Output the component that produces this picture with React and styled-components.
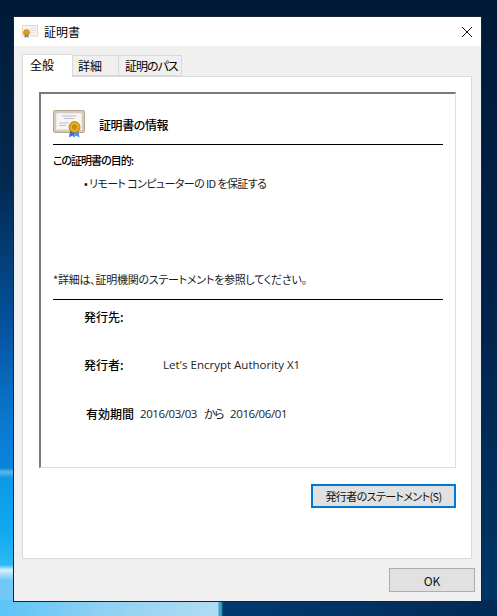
import React from 'react';
import styled, { createGlobalStyle } from 'styled-components';

const GlobalStyle = createGlobalStyle`
  html, body {
    margin: 0;
    padding: 0;
  }

  body {
    width: 497px;
    height: 616px;
    overflow: hidden;
    font-family: "Noto Sans CJK JP", "Open Sans", sans-serif;
    font-size: 12px;
    font-feature-settings: "palt";
    color: #000;
  }
`;

const Desktop = styled.div`
  box-sizing: border-box;
  width: 497px;
  height: 616px;
  padding: 16px 15px 14px 13px;
  background:
    linear-gradient(90deg, #5cc4f8 0, #8fd0f2 100px, #b0dcf2 218px, #3aa0c0 219px, #40a8c8 221px, #013a70 223px, #012a55 497px) 0 600px / 497px 16px no-repeat,
    linear-gradient(180deg, #001a38 0, #02294f 180px, #04509a 320px, #0a78d0 420px, #0a84dc 468px, #5ab8ea 472px, #0d98e8 478px, #10a8f0 530px, #30b8f4 565px, #d8f0fa 570px, #70c8f8 580px, #70c8f8 616px) 0 0 / 14px 616px no-repeat,
    linear-gradient(180deg, #001a38 0, #00234a 300px, #013766 616px);
`;

const Window = styled.div`
  box-sizing: border-box;
  height: 586px;
  display: flex;
  flex-direction: column;
  background: #f0f0f0;
  border: 1px solid #1a2430;
`;

const TitleBar = styled.div`
  display: flex;
  align-items: center;
  height: 29px;
  padding: 0 8px;
  background: #fff;
`;

const Title = styled.span`
  flex: 1;
  margin-left: 6px;
`;

const TabList = styled.div`
  display: flex;
  align-items: flex-end;
  height: 30px;
  margin: 0 9px 0 8px;
`;

const Tab = styled.div`
  box-sizing: border-box;
  width: ${props => props.$width}px;
  height: ${props => (props.$active ? 23 : 21)}px;
  padding-left: ${props => props.$inset}px;
  line-height: 19px;
  white-space: nowrap;
  letter-spacing: ${props => props.$spacing || 0}px;
  background: ${props => (props.$active ? '#fff' : '#f0f0f0')};
  border: 1px solid #d9d9d9;
  border-bottom: ${props => (props.$active ? 'none' : '1px solid #d9d9d9')};
  border-left: ${props => (props.$first ? '1px solid #d9d9d9' : 'none')};
  margin-bottom: ${props => (props.$active ? -1 : 0)}px;
  position: relative;
`;

const TabPane = styled.div`
  box-sizing: border-box;
  flex: 1;
  display: flex;
  flex-direction: column;
  margin: 0 9px 0 8px;
  padding: 15px 15px 0 16px;
  background: #fff;
  border: 1px solid #d9d9d9;
`;

const CertBox = styled.div`
  box-sizing: border-box;
  height: 376px;
  padding: 12px 12px 0 12px;
  border-top: 2px solid #7a7a7a;
  border-left: 2px solid #7a7a7a;
  border-right: 1px solid #e0e0e0;
  border-bottom: 1px solid #e0e0e0;
`;

const CertHeader = styled.div`
  box-sizing: border-box;
  display: flex;
  align-items: center;
  height: 39px;
  padding-bottom: 2px;
  border-bottom: 1px solid #000;
  gap: 14px;
  font-weight: 500;
  letter-spacing: -0.4px;
`;

const Purpose = styled.div`
  box-sizing: border-box;
  height: 155px;
  padding-top: 6px;
  border-bottom: 1px solid #000;
  display: flex;
  flex-direction: column;
  font-size: 11px;
`;

const PurposeTitle = styled.div`
  font-weight: 500;
  line-height: 18px;
  letter-spacing: -1px;
`;

const PurposeItem = styled.div`
  margin: 5px 0 0 31px;
  line-height: 18px;
  color: #1a1a1a;
  letter-spacing: -0.6px;
`;

const Note = styled.div`
  margin-top: auto;
  margin-bottom: 11px;
  line-height: 18px;
  color: #1a1a1a;
  letter-spacing: -0.25px;
`;

const InfoRows = styled.div`
  display: flex;
  flex-direction: column;
  gap: 30.5px;
  padding-top: 7px;
`;

const InfoRow = styled.div`
  display: flex;
  align-items: center;
  height: 18px;
  padding-left: ${props => props.$inset}px;
`;

const InfoLabel = styled.span`
  width: ${props => props.$width}px;
  font-weight: 500;
`;

const ValueText = styled.span`
  font-family: "Open Sans", "Noto Sans CJK JP", sans-serif;
  font-size: 11.5px;
  color: #222;
`;

const DateText = styled(ValueText)`
  letter-spacing: -0.4px;
`;

const Spacer = styled.span`
  margin: 0 7px;
  color: #222;
  letter-spacing: -1.5px;
`;

const StatementRow = styled.div`
  display: flex;
  justify-content: flex-end;
  margin-top: 16px;
`;

const Button = styled.button`
  box-sizing: border-box;
  height: ${props => props.$height}px;
  width: ${props => props.$width}px;
  padding: 0;
  font-family: inherit;
  font-size: ${props => (props.$focused ? 11 : 12)}px;
  font-feature-settings: inherit;
  letter-spacing: ${props => (props.$focused ? -0.6 : 0)}px;
  white-space: nowrap;
  color: #111;
  background: #e1e1e1;
  border: ${props => (props.$focused ? '2px solid #0078d7' : '1px solid #adadad')};
`;

const Footer = styled.div`
  display: flex;
  justify-content: flex-end;
  align-items: center;
  height: 42px;
  padding-right: 6px;
`;

const CloseIcon = () => (
  <svg width="12" height="12" viewBox="0 0 12 12">
    <path d="M1 1 L11 11 M11 1 L1 11" stroke="#111" strokeWidth="1" fill="none" />
  </svg>
);

const TitleIcon = () => (
  <svg width="16" height="13" viewBox="0 0 16 13">
    <rect x="0.5" y="0.5" width="15" height="10.5" fill="#fbf3e6" stroke="#ecd5b4" />
    <path d="M8 3.5 H13.5 M8 5.5 H13.5 M8 7.5 H12" stroke="#dcdfe8" strokeWidth="1" />
    <path d="M3 9 L2.5 13 L4.5 11.5 L6.5 13 L6 9 Z" fill="#3d7bd8" />
    <circle cx="4.5" cy="7.5" r="3" fill="#dc9a1e" stroke="#b87c14" strokeWidth="0.6" />
  </svg>
);

const CertIcon = () => (
  <svg width="32" height="28" viewBox="0 0 32 28">
    <rect x="0.5" y="0.5" width="31" height="22" rx="1.5" fill="#d8cbb5" stroke="#b5a68e" />
    <rect x="3" y="3" width="26" height="17" fill="#f8f6f2" stroke="#c9cbd4" strokeWidth="0.6" />
    <path d="M9 6 H23 M11 8.5 H21 M6 13 H15 M6 15.5 H13" stroke="#a9adc0" strokeWidth="0.8" />
    <path d="M17 21 L16 27.5 L19.5 25.5 L21 27.5 L22 21 Z" fill="#2f72d8" />
    <path d="M22 21 L21 27.5 L23 25.5 L26.5 27.5 L25.5 21 Z" fill="#4a8fe8" />
    <circle cx="21.5" cy="17" r="5.5" fill="#e6ad1e" stroke="#a87a10" strokeWidth="0.8" />
    <circle cx="21.5" cy="17" r="2.5" fill="#c08a18" />
  </svg>
);

function App() {
  return (
    <Desktop>
      <GlobalStyle />
      <Window>
        <TitleBar>
          <TitleIcon />
          <Title>証明書</Title>
          <CloseIcon />
        </TitleBar>
        <TabList>
          <Tab $width={51} $inset={7} $active $first>全般</Tab>
          <Tab $width={46} $inset={5}>詳細</Tab>
          <Tab $width={63} $inset={6} $spacing={-1}>証明のパス</Tab>
        </TabList>
        <TabPane>
          <CertBox>
            <CertHeader>
              <CertIcon />
              証明書の情報
            </CertHeader>
            <Purpose>
              <PurposeTitle>この証明書の目的:</PurposeTitle>
              <PurposeItem>• リモート コンピューターの ID を保証する</PurposeItem>
              <Note>*詳細は、証明機関のステートメントを参照してください。</Note>
            </Purpose>
            <InfoRows>
              <InfoRow $inset={31}>
                <InfoLabel $width={79}>発行先:</InfoLabel>
              </InfoRow>
              <InfoRow $inset={31}>
                <InfoLabel $width={79}>発行者:</InfoLabel>
                <ValueText>Let's Encrypt Authority X1</ValueText>
              </InfoRow>
              <InfoRow $inset={33}>
                <InfoLabel $width={54}>有効期間</InfoLabel>
                <DateText>2016/03/03</DateText>
                <Spacer>から</Spacer>
                <DateText>2016/06/01</DateText>
              </InfoRow>
            </InfoRows>
          </CertBox>
          <StatementRow>
            <Button $focused $width={145} $height={24}>発行者のステートメント(S)</Button>
          </StatementRow>
        </TabPane>
        <Footer>
          <Button $width={86} $height={24}>OK</Button>
        </Footer>
      </Window>
    </Desktop>
  );
}

export default App;
